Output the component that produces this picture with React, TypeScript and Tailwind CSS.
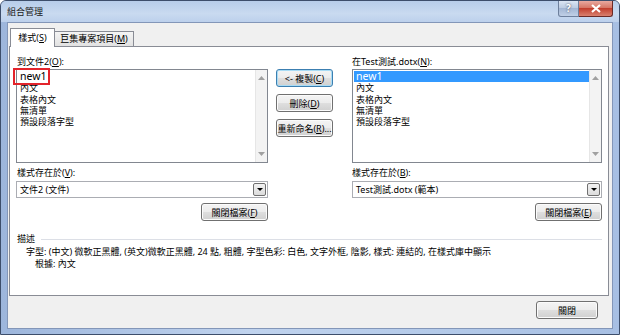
import React from "react";

const font = "font-['Noto_Sans','Noto_Sans_CJK_TC',sans-serif]";

function U({ children }: { children: React.ReactNode }) {
  return <span className="underline underline-offset-[1px]">{children}</span>;
}

function Btn({
  children,
  def = false,
  className = "",
}: {
  children: React.ReactNode;
  def?: boolean;
  className?: string;
}) {
  return (
    <div
      className={`flex items-center justify-center h-[18px] rounded-[3px] border text-[9px] leading-none text-black ${
        def
          ? "border-[#3c7fb1] shadow-[inset_0_0_0_1px_#a9dcf5]"
          : "border-[#707070] shadow-[inset_0_0_0_1px_#fbfbfb]"
      } bg-[linear-gradient(#f4f4f4_0%,#ececec_48%,#dedede_52%,#d0d0d0_100%)] ${className}`}
    >
      {children}
    </div>
  );
}

function Arrow({ up }: { up?: boolean }) {
  return (
    <svg width="7" height="4" viewBox="0 0 7 4">
      <path d={up ? "M0 4 L3.5 0 L7 4 Z" : "M0 0 L3.5 4 L7 0 Z"} fill="#a0a0a0" />
    </svg>
  );
}

const items = ["new1", "內文", "表格內文", "無清單", "預設段落字型"];

function StyleList({ selected }: { selected?: boolean }) {
  return (
    <div className="flex h-[94px] border border-[#828790] bg-white">
      <div className="flex-1 pt-[1px] pl-[1px]">
        {items.map((it, i) => (
          <div
            key={it}
            className={`pl-[2px] h-[11.25px] leading-[11.25px] ${
              it === "new1" ? "text-[10.5px]" : "text-[9px]"
            } ${selected && i === 0 ? "bg-[#3399ff] text-white" : "text-black"}`}
          >
            {it}
          </div>
        ))}
      </div>
      <div className="w-[12px] flex flex-col items-center justify-between py-[6px] bg-[#f3f3f3] border-l border-[#e6e6e6]">
        <Arrow up />
        <Arrow />
      </div>
    </div>
  );
}

function Combo({ text }: { text: string }) {
  return (
    <div className="flex h-[17px] border border-[#abadb3] bg-white">
      <div className="flex-1 pl-[3px] text-[9px] leading-[15px] text-black">{text}</div>
      <div className="w-[13px] m-[1px] flex items-center justify-center rounded-[2px] border border-[#707070] bg-[linear-gradient(#f2f2f2,#dcdcdc)]">
        <svg width="6" height="3" viewBox="0 0 6 3">
          <path d="M0 0 L3 3 L6 0 Z" fill="#000" />
        </svg>
      </div>
    </div>
  );
}

export default function App() {
  return (
    <div
      className={`${font} w-[620px] h-[335px] flex flex-col rounded-t-[6px] border border-[#3d4e6b] bg-[linear-gradient(90deg,#9db6dc,#c0d3ee_40%,#b4cae9_70%,#a7bfe3)] overflow-hidden`}
    >
      {/* title bar */}
      <div className="h-[21px] flex justify-between items-start pl-[6px] pr-[6px] bg-[linear-gradient(180deg,#b7cdea,#c9daf0_60%,#bcd0ec)]">
        <div className="pt-[5px] text-[9px] leading-[12px] text-[#1a1a1a]">組合管理</div>
        <div className="flex">
          <div className="w-[21px] h-[16px] flex items-center justify-center rounded-bl-[3px] border border-t-0 border-[#6d7f9c] bg-[linear-gradient(#dbe5f3,#b9c9e0_50%,#a3b6d4_50%,#c0d0e6)] text-[10px] font-bold text-white [text-shadow:0_0_2px_#334]">
            ?
          </div>
          <div className="w-[34px] h-[16px] flex items-center justify-center rounded-br-[3px] border border-t-0 border-l-0 border-[#6b2a26] bg-[linear-gradient(#e9a99f,#d4705f_50%,#c23f2e_50%,#d9816f)]">
            <svg width="10" height="9" viewBox="0 0 10 9">
              <path d="M1 1 L9 8 M9 1 L1 8" stroke="#fff" strokeWidth="2.2" />
            </svg>
          </div>
        </div>
      </div>

      {/* client */}
      <div className="mx-[6px] h-[307px] flex flex-col bg-[#f0f0f0] border border-[#8396b8] text-black">
        {/* tabs */}
        <div className="h-[23px] flex items-end pl-[2px]">
          <div className="relative z-10 -mb-px h-[19px] w-[45px] flex items-center justify-center border border-b-0 border-[#898c95] bg-white text-[9px]">
            樣式(<U>S</U>)
          </div>
          <div className="h-[15px] w-[79px] flex items-center justify-center border border-l-0 border-b-0 border-[#898c95] bg-[linear-gradient(#f4f4f4,#e2e2e2)] text-[9px]">
            巨集專案項目(<U>M</U>)
          </div>
        </div>

        {/* panel */}
        <div className="relative ml-[1px] w-[600px] h-[250px] border border-[#898c95] bg-white pl-[6px] pt-[9px]">
          <div className="flex">
            {/* left column */}
            <div className="w-[252px] flex flex-col">
              <div className="h-[12px] pl-[1px] text-[9px] leading-[12px]">
                到文件2(<U>O</U>):
              </div>
              <div className="mt-[1px]">
                <StyleList />
              </div>
              <div className="mt-[4px] h-[12px] pl-[1px] text-[9px] leading-[12px]">
                樣式存在於(<U>V</U>):
              </div>
              <div className="mt-[2px]">
                <Combo text="文件2 (文件)" />
              </div>
              <div className="mt-[5px] flex justify-end">
                <Btn className="w-[67px]">
                  關閉檔案(<U>F</U>)
                </Btn>
              </div>
            </div>

            {/* middle buttons */}
            <div className="ml-[8px] w-[57px] pt-[13px] flex flex-col gap-[7px]">
              <Btn def>
                &lt;- 複製(<U>C</U>)
              </Btn>
              <Btn>
                刪除(<U>D</U>)
              </Btn>
              <Btn>
                重新命名(<U>R</U>)...
              </Btn>
            </div>

            {/* right column */}
            <div className="ml-[19px] w-[250px] flex flex-col">
              <div className="h-[12px] text-[9px] leading-[12px]">
                在Test測試.dotx(<U>N</U>):
              </div>
              <div className="mt-[1px]">
                <StyleList selected />
              </div>
              <div className="mt-[4px] h-[12px] text-[9px] leading-[12px]">
                樣式存在於(<U>B</U>):
              </div>
              <div className="mt-[2px]">
                <Combo text="Test測試.dotx (範本)" />
              </div>
              <div className="mt-[5px] flex justify-end">
                <Btn className="w-[67px]">
                  關閉檔案(<U>E</U>)
                </Btn>
              </div>
            </div>
          </div>

          {/* description */}
          <div className="mt-[12px] flex items-center pr-[6px]">
            <div className="pl-[1px] text-[9px] leading-[12px]">描述</div>
            <div className="ml-[6px] flex-1 h-px bg-[#dcdfe6]" />
          </div>
          <div className="mt-[1px] pl-[10px] text-[9px] leading-[12px]">
            字型: (中文) 微軟正黑體, (英文)微軟正黑體, 24 點, 粗體, 字型色彩: 白色, 文字外框, 陰影, 樣式: 連結的, 在樣式庫中顯示
          </div>
          <div className="pl-[19px] text-[9px] leading-[12px]">根據: 內文</div>

          {/* annotation */}
          <div className="absolute left-[3px] top-[21px] w-[37px] h-[17px] border-2 border-[#e3242b]" />
        </div>

        {/* bottom button */}
        <div className="mt-[5px] flex justify-end pr-[14px]">
          <Btn className="w-[62px]">關閉</Btn>
        </div>
      </div>
    </div>
  );
}
